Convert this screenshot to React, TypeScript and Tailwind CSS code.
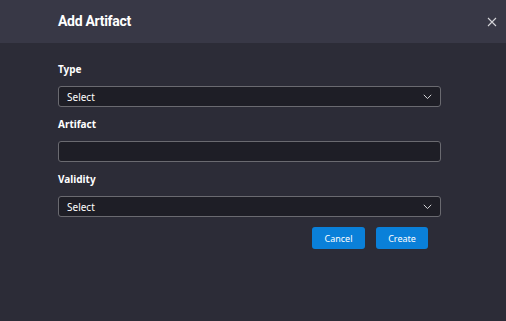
import React from "react";

function Chevron() {
  return (
    <svg width="9" height="6" viewBox="0 0 9 6" fill="none">
      <path d="M0.8 0.8 L4.5 4.6 L8.2 0.8" stroke="#d4d4d8" strokeWidth="1" />
    </svg>
  );
}

function SelectBox() {
  return (
    <div className="h-[21px] w-full rounded-[3px] border border-[#6a6a70] bg-[#1e1e26] flex items-center justify-between pl-[8px] pr-[8px]">
      <span className="text-[10px] text-white leading-none">Select</span>
      <Chevron />
    </div>
  );
}

export default function App() {
  return (
    <div className="w-[506px] h-[321px] bg-[#2c2c37] flex flex-col" style={{ fontFamily: "'Noto Sans', 'Open Sans', sans-serif" }}>
      <div className="h-[43px] bg-[#383846] flex items-center justify-between pl-[58px] pr-[9px] shrink-0">
        <span className="text-[14px] font-bold text-white tracking-[-0.3px]" style={{ fontFamily: "Roboto, sans-serif" }}>Add Artifact</span>
        <svg width="10" height="10" viewBox="0 0 10 10">
          <path d="M1 1 L9 9 M9 1 L1 9" stroke="#d4d4d8" strokeWidth="1.1" />
        </svg>
      </div>
      <div className="pl-[58px] pr-[65px] pt-[20px] flex flex-col">
        <div className="text-[10px] font-bold text-white leading-[12px] h-[12px]">Type</div>
        <div className="mt-[11px]"><SelectBox /></div>
        <div className="mt-[11px] text-[10px] font-bold text-white leading-[12px] h-[12px]">Artifact</div>
        <div className="mt-[11px] h-[21px] w-full rounded-[3px] border border-[#6a6a70] bg-[#1e1e26]" />
        <div className="mt-[11px] text-[10px] font-bold text-white leading-[12px] h-[12px]">Validity</div>
        <div className="mt-[11px]"><SelectBox /></div>
        <div className="mt-[10px] flex justify-end gap-[11px] pr-[13px]">
          <button className="w-[53px] h-[22px] rounded-[3px] bg-[#0a80d9] text-white text-[9px] leading-none">Cancel</button>
          <button className="w-[52px] h-[22px] rounded-[3px] bg-[#0a80d9] text-white text-[9px] leading-none">Create</button>
        </div>
      </div>
    </div>
  );
}
